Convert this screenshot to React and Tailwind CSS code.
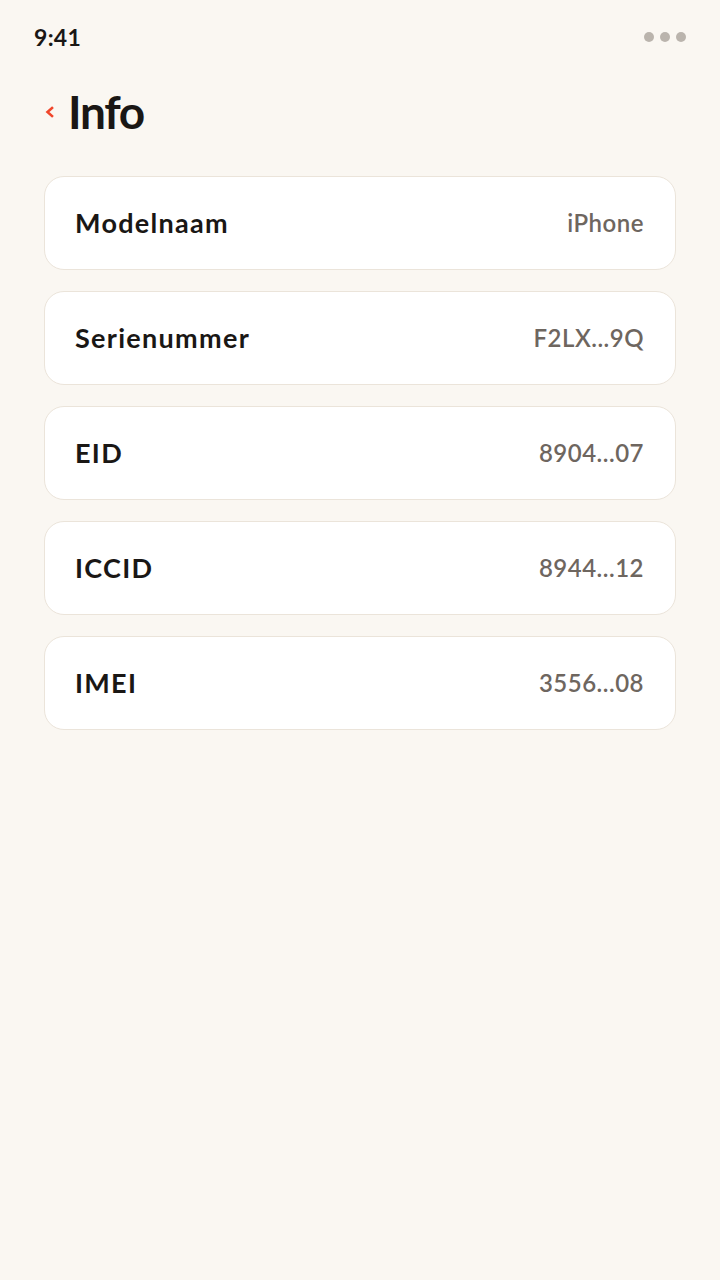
export default function App() {
  const rows = [
    ["Modelnaam", "iPhone"],
    ["Serienummer", "F2LX...9Q"],
    ["EID", "8904...07"],
    ["ICCID", "8944...12"],
    ["IMEI", "3556...08"],
  ];
  return (
    <div className="min-h-[1280px] w-[720px] bg-[#faf7f2]" style={{ fontFamily: "Lato, 'Noto Sans', sans-serif" }}>
      <div className="h-[74px] flex items-center justify-between pl-[34px] pr-[34px]">
        <span className="text-[23px] font-bold text-[#1a1715] tracking-[0.3px]">9:41</span>
        <div className="flex gap-[6px]">
          <span className="w-[10px] h-[10px] rounded-full bg-[#bab4ad]"></span>
          <span className="w-[10px] h-[10px] rounded-full bg-[#bab4ad]"></span>
          <span className="w-[10px] h-[10px] rounded-full bg-[#bab4ad]"></span>
        </div>
      </div>
      <div className="h-[76px] flex items-center pl-[44px] gap-[13px]">
        <svg width="11" height="16" viewBox="0 0 11 16">
          <path d="M8 4 L3.5 8 L8 12" fill="none" stroke="#f0462b" strokeWidth="2.6" strokeLinecap="square" />
        </svg>
        <span className="text-[46px] font-bold text-[#1a1715] leading-none tracking-[-1.3px]">Info</span>
      </div>
      <div className="mt-[26px] px-[44px] flex flex-col gap-[21px]">
        {rows.map(([k, v]) => (
          <div key={k} className="h-[94px] bg-white border border-[#ebe4da] rounded-[20px] flex items-center justify-between pl-[30px] pr-[31px]">
            <span className="text-[27px] font-bold text-[#1a1715] tracking-[1.3px]">{k}</span>
            <span className="text-[24px] font-semibold text-[#6e665f] tracking-[0.5px]">{v}</span>
          </div>
        ))}
      </div>
    </div>
  );
}
